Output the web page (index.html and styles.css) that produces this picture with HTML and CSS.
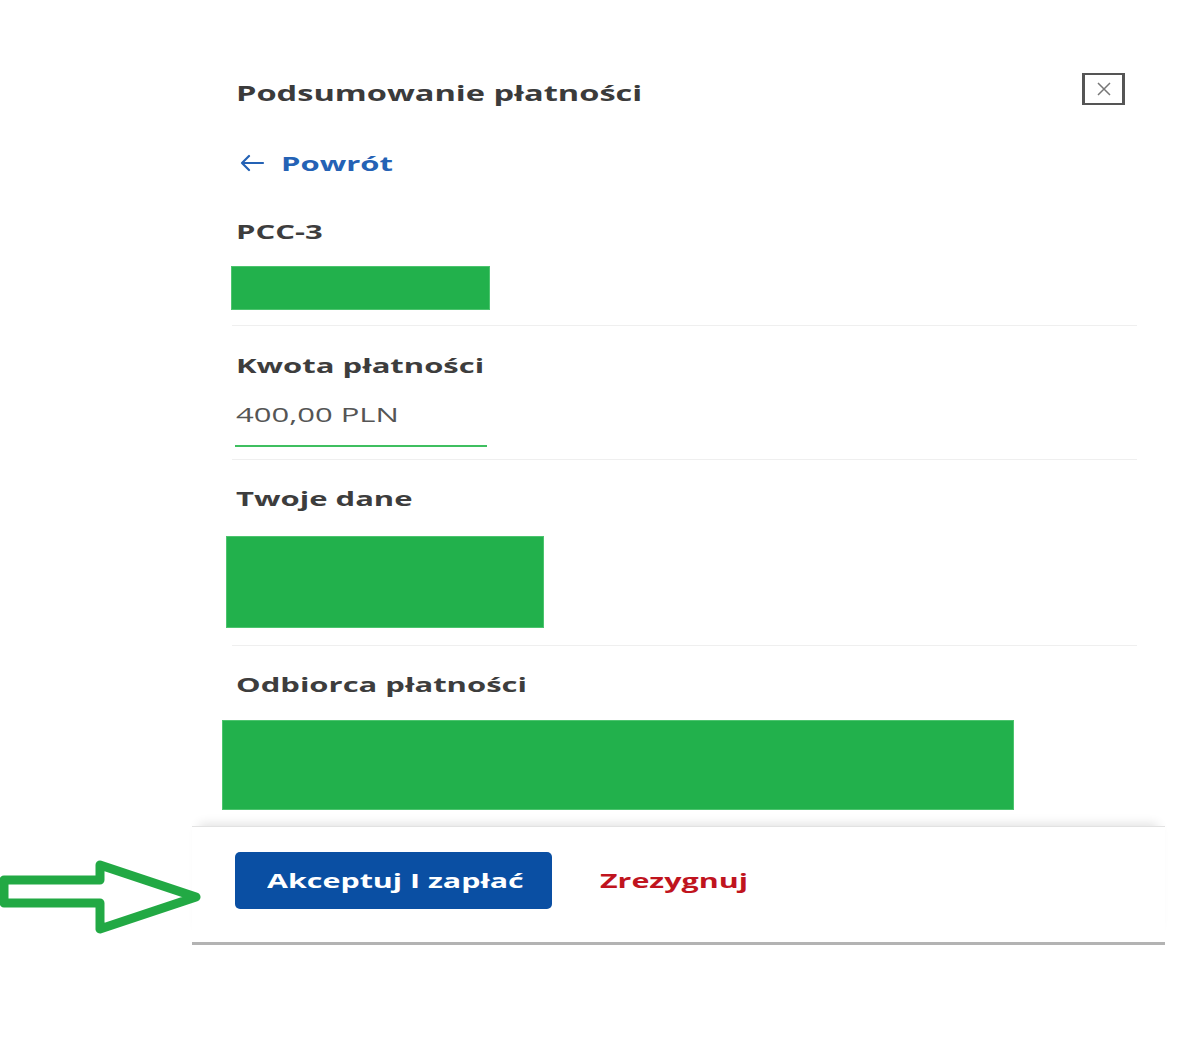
FILE: index.html
```html
<!DOCTYPE html>
<html lang="pl">
<head>
    <meta charset="UTF-8">
    <meta name="viewport" content="width=device-width, initial-scale=1.0">
    <title>Podsumowanie płatności</title>
    <link rel="stylesheet" href="styles.css">
</head>
<body>
    <div class="panel">
        <div class="content">
            <div class="header">
                <h1 class="title"><span class="wide">Podsumowanie płatności</span></h1>
                <button class="close" aria-label="Zamknij">
                    <svg width="18" height="14" viewBox="0 0 18 14">
                        <path d="M3 1 L15 13 M15 1 L3 13" stroke="#777" stroke-width="1.5" fill="none"/>
                    </svg>
                </button>
            </div>

            <a class="back" href="#">
                <svg width="26" height="18" viewBox="0 0 26 18">
                    <path d="M24 9 H3 M10 2 L3 9 L10 16" stroke="#2462b5" stroke-width="2.2" fill="none" stroke-linecap="round" stroke-linejoin="round"/>
                </svg>
                <span class="wide">Powrót</span>
            </a>

            <div class="section section-pcc">
                <div class="label"><span class="wide">PCC-3</span></div>
                <div class="redacted redacted-pcc"></div>
            </div>

            <div class="section section-amount">
                <div class="label"><span class="wide">Kwota płatności</span></div>
                <div class="amount"><span class="wide">400,00 PLN</span></div>
                <div class="amount-line"></div>
            </div>

            <div class="section">
                <div class="label"><span class="wide">Twoje dane</span></div>
                <div class="redacted redacted-data"></div>
            </div>

            <div class="section last">
                <div class="label"><span class="wide">Odbiorca płatności</span></div>
                <div class="redacted redacted-recipient"></div>
            </div>
        </div>

        <div class="footer">
            <button class="accept"><span class="wide wide-btn">Akceptuj I zapłać</span></button>
            <a class="cancel" href="#"><span class="wide wide-btn">Zrezygnuj</span></a>
        </div>
    </div>

    <svg class="pointer" width="210" height="80" viewBox="0 0 210 80">
        <polygon points="4,25 100,25 100,10 196,42 100,74 100,48 4,48" fill="none" stroke="#22a944" stroke-width="9" stroke-linejoin="round"/>
    </svg>
</body>
</html>
```

FILE: styles.css
```css
body {
    margin: 0;
    font-family: "Open Sans", "DejaVu Sans", sans-serif;
    background: #fff;
    color: #3d3d3d;
}
.wide {
    display: inline-block;
    transform: scaleX(1.55);
    transform-origin: left center;
    white-space: nowrap;
}
.wide-btn {
    transform: scaleX(1.6);
}
.panel {
    width: 973px;
    margin-left: 192px;
}
.content {
    padding: 0 28px 0 40px;
}
.header {
    display: flex;
    justify-content: space-between;
    align-items: center;
    height: 44px;
    margin-top: 70px;
}
.title {
    margin: 0;
    padding-left: 4px;
    font-size: 22px;
    font-weight: 700;
    color: #3b3b3b;
    line-height: 30px;
}
.title .wide {
    transform: scaleX(1.48);
}
.close {
    width: 43px;
    height: 32px;
    margin: 0 12px 6px 0;
    border: 2px solid #555;
    border-width: 2px 3px;
    background: #fff;
    display: flex;
    align-items: center;
    justify-content: center;
    padding: 0;
}
.back {
    display: flex;
    align-items: center;
    height: 30px;
    margin-top: 34px;
    padding-left: 7px;
    color: #2462b5;
    font-size: 20px;
    font-weight: 700;
    text-decoration: none;
}
.back svg {
    margin-right: 16px;
}
.section {
    border-bottom: 1px solid #efefef;
    padding-bottom: 15px;
}
.section.last {
    border-bottom: none;
    padding-bottom: 0;
}
.section-pcc {
    padding-bottom: 16px;
}
.label {
    padding-left: 4px;
    font-size: 20px;
    font-weight: 700;
    line-height: 30px;
    color: #3d3d3d;
    margin-top: 24px;
}
.section-pcc .label {
    margin-top: 39px;
}
.section-amount .label {
    margin-top: 25px;
}
.redacted {
    background: #22b14c;
    box-shadow: 0 0 0 1px #4cc46e;
}
.redacted-pcc {
    width: 257px;
    height: 42px;
    margin-top: 20px;
}
.amount {
    padding-left: 4px;
    margin-top: 19px;
    font-size: 20px;
    line-height: 30px;
    color: #555;
}
.amount-line {
    width: 252px;
    height: 2px;
    margin: 15px 0 -3px 3px;
    background: #3fbf60;
}
.redacted-data {
    width: 316px;
    height: 90px;
    margin: 23px 0 3px -5px;
}
.redacted-recipient {
    width: 790px;
    height: 88px;
    margin: 21px 0 0 -9px;
}
.footer {
    margin-top: 17px;
    display: flex;
    align-items: center;
    padding: 25px 0 33px 43px;
    border-top: 1px solid #e2e2e2;
    border-bottom: 3px solid #b3b3b3;
    box-shadow: 0 -9px 10px -7px rgba(0, 0, 0, 0.12);
}
.accept {
    width: 317px;
    height: 57px;
    border: none;
    border-radius: 5px;
    background: #0a4fa3;
    color: #fff;
    font-family: inherit;
    font-size: 19px;
    font-weight: 700;
    text-align: left;
    padding-left: 32px;
}
.cancel {
    margin-left: 48px;
    color: #c0141e;
    font-size: 19px;
    font-weight: 700;
    text-decoration: none;
}
.pointer {
    position: absolute;
    left: 0;
    top: 855px;
}
```
